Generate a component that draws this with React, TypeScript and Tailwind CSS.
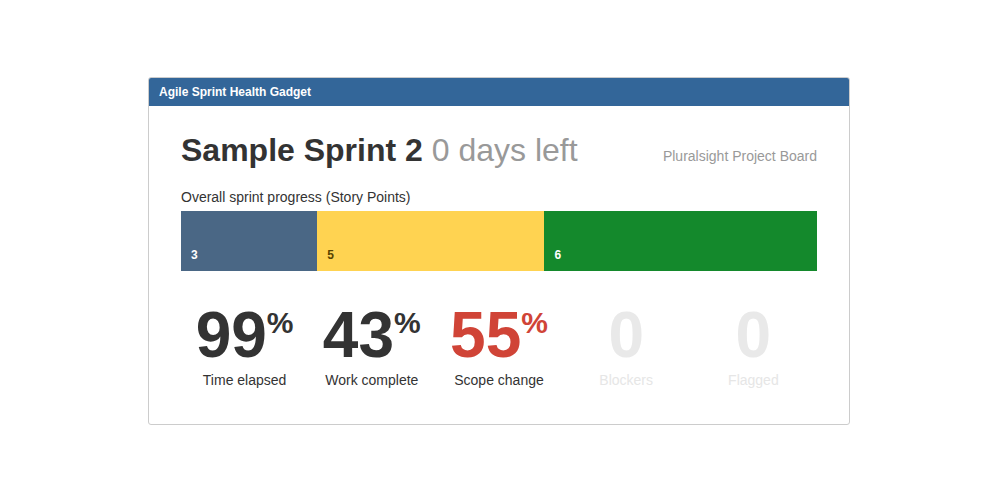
const segments = [
  { value: 3, bg: "bg-[#4a6785]", text: "text-white" },
  { value: 5, bg: "bg-[#ffd351]", text: "text-[#594300]" },
  { value: 6, bg: "bg-[#14892c]", text: "text-white" },
];

const stats = [
  { value: "99", pct: true, label: "Time elapsed", num: "text-[#333333]", lbl: "text-[#333333]" },
  { value: "43", pct: true, label: "Work complete", num: "text-[#333333]", lbl: "text-[#333333]" },
  { value: "55", pct: true, label: "Scope change", num: "text-[#d04437]", lbl: "text-[#333333]" },
  { value: "0", pct: false, label: "Blockers", num: "text-[#e9e9e9]", lbl: "text-[#e6e6e6]" },
  { value: "0", pct: false, label: "Flagged", num: "text-[#e9e9e9]", lbl: "text-[#e6e6e6]" },
];

export default function App() {
  const total = segments.reduce((s, x) => s + x.value, 0);

  return (
    <div className="min-h-[503px] bg-white pt-[77px] pr-[2px] font-['Liberation_Sans',Arial,sans-serif]">
      <div className="mx-auto w-[702px] rounded-[3px] border border-[#cccccc] overflow-hidden">
        {/* Header */}
        <div className="h-[28px] bg-[#336699] px-[10px] flex items-center">
          <span className="text-[12px] font-bold text-white">Agile Sprint Health Gadget</span>
        </div>

        {/* Body */}
        <div className="px-8 pt-[26px] pb-[34px]">
          <div className="flex items-baseline justify-between">
            <h1 className="text-[32px] leading-[36px] font-bold text-[#333333]">
              Sample Sprint 2 <span className="font-normal text-[#999999]">0 days left</span>
            </h1>
            <span className="text-[14px] text-[#999999]">Pluralsight Project Board</span>
          </div>

          <p className="mt-[19px] mb-1 text-[14px] leading-5 text-[#333333]">
            Overall sprint progress (Story Points)
          </p>

          <div className="flex h-[60px]">
            {segments.map((s, i) => (
              <div
                key={i}
                className={`${s.bg} flex items-end pl-2.5 pb-2`}
                style={{ width: `${(s.value / total) * 100}%` }}
              >
                <span className={`text-[12px] leading-4 font-bold ${s.text}`}>{s.value}</span>
              </div>
            ))}
          </div>

          <div className="mt-8 grid grid-cols-5">
            {stats.map((s, i) => (
              <div key={i} className="flex flex-col items-center">
                <div className={`flex items-start font-bold ${s.num}`}>
                  <span className="text-[64px] leading-[64px]">{s.value}</span>
                  {s.pct && <span className="mt-1 text-[30px] leading-8">%</span>}
                </div>
                <span className={`mt-[3px] text-[14px] leading-5 ${s.lbl}`}>{s.label}</span>
              </div>
            ))}
          </div>
        </div>
      </div>
    </div>
  );
}
